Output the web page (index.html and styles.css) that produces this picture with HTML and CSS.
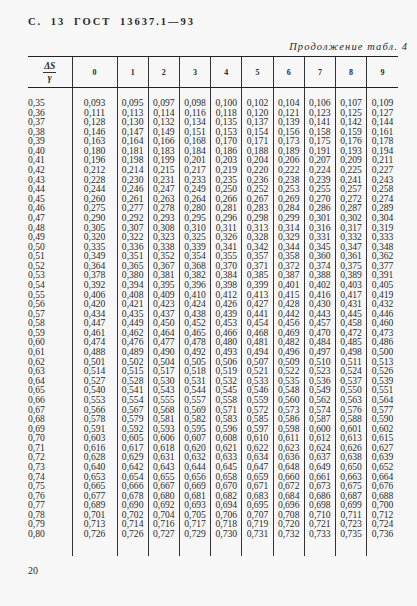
FILE: index.html
```html
<!DOCTYPE html>
<html lang="ru">
<head>
<meta charset="utf-8">
<title>ГОСТ 13637.1—93, с. 13</title>
<link rel="stylesheet" href="styles.css">
</head>
<body>
<div class="page">
<p class="title">С. 13 ГОСТ 13637.1—93</p>
<p class="cont">Продолжение табл. 4</p>
<table class="grid">
<colgroup><col class="c-label"><col class="c0"><col class="cn"><col class="cn"><col class="cn"><col class="cn"><col class="cn"><col class="cn"><col class="cn"><col class="cn"><col class="cn"></colgroup>
<thead>
<tr><th class="h-label"><span class="frac"><span class="num">ΔS</span><span class="den">γ</span></span></th><th>0</th><th>1</th><th>2</th><th>3</th><th>4</th><th>5</th><th>6</th><th>7</th><th>8</th><th>9</th></tr>
</thead>
<tbody>
<tr class="gap-top"><td></td><td></td><td></td><td></td><td></td><td></td><td></td><td></td><td></td><td></td><td></td></tr>
<tr><td>0,35</td><td>0,093</td><td>0,095</td><td>0,097</td><td>0,098</td><td>0,100</td><td>0,102</td><td>0,104</td><td>0,106</td><td>0,107</td><td>0,109</td></tr>
<tr><td>0,36</td><td>0,111</td><td>0,113</td><td>0,114</td><td>0,116</td><td>0,118</td><td>0,120</td><td>0,121</td><td>0,123</td><td>0,125</td><td>0,127</td></tr>
<tr><td>0,37</td><td>0,128</td><td>0,130</td><td>0,132</td><td>0,134</td><td>0,135</td><td>0,137</td><td>0,139</td><td>0,141</td><td>0,142</td><td>0,144</td></tr>
<tr><td>0,38</td><td>0,146</td><td>0,147</td><td>0,149</td><td>0,151</td><td>0,153</td><td>0,154</td><td>0,156</td><td>0,158</td><td>0,159</td><td>0,161</td></tr>
<tr><td>0,39</td><td>0,163</td><td>0,164</td><td>0,166</td><td>0,168</td><td>0,170</td><td>0,171</td><td>0,173</td><td>0,175</td><td>0,176</td><td>0,178</td></tr>
<tr><td>0,40</td><td>0,180</td><td>0,181</td><td>0,183</td><td>0,184</td><td>0,186</td><td>0,188</td><td>0,189</td><td>0,191</td><td>0,193</td><td>0,194</td></tr>
<tr><td>0,41</td><td>0,196</td><td>0,198</td><td>0,199</td><td>0,201</td><td>0,203</td><td>0,204</td><td>0,206</td><td>0,207</td><td>0,209</td><td>0,211</td></tr>
<tr><td>0,42</td><td>0,212</td><td>0,214</td><td>0,215</td><td>0,217</td><td>0,219</td><td>0,220</td><td>0,222</td><td>0,224</td><td>0,225</td><td>0,227</td></tr>
<tr><td>0,43</td><td>0,228</td><td>0,230</td><td>0,231</td><td>0,233</td><td>0,235</td><td>0,236</td><td>0,238</td><td>0,239</td><td>0,241</td><td>0,243</td></tr>
<tr><td>0,44</td><td>0,244</td><td>0,246</td><td>0,247</td><td>0,249</td><td>0,250</td><td>0,252</td><td>0,253</td><td>0,255</td><td>0,257</td><td>0,258</td></tr>
<tr><td>0,45</td><td>0,260</td><td>0,261</td><td>0,263</td><td>0,264</td><td>0,266</td><td>0,267</td><td>0,269</td><td>0,270</td><td>0,272</td><td>0,274</td></tr>
<tr><td>0,46</td><td>0,275</td><td>0,277</td><td>0,278</td><td>0,280</td><td>0,281</td><td>0,283</td><td>0,284</td><td>0,286</td><td>0,287</td><td>0,289</td></tr>
<tr><td>0,47</td><td>0,290</td><td>0,292</td><td>0,293</td><td>0,295</td><td>0,296</td><td>0,298</td><td>0,299</td><td>0,301</td><td>0,302</td><td>0,304</td></tr>
<tr><td>0,48</td><td>0,305</td><td>0,307</td><td>0,308</td><td>0,310</td><td>0,311</td><td>0,313</td><td>0,314</td><td>0,316</td><td>0,317</td><td>0,319</td></tr>
<tr><td>0,49</td><td>0,320</td><td>0,322</td><td>0,323</td><td>0,325</td><td>0,326</td><td>0,328</td><td>0,329</td><td>0,331</td><td>0,332</td><td>0,333</td></tr>
<tr><td>0,50</td><td>0,335</td><td>0,336</td><td>0,338</td><td>0,339</td><td>0,341</td><td>0,342</td><td>0,344</td><td>0,345</td><td>0,347</td><td>0,348</td></tr>
<tr><td>0,51</td><td>0,349</td><td>0,351</td><td>0,352</td><td>0,354</td><td>0,355</td><td>0,357</td><td>0,358</td><td>0,360</td><td>0,361</td><td>0,362</td></tr>
<tr><td>0,52</td><td>0,364</td><td>0,365</td><td>0,367</td><td>0,368</td><td>0,370</td><td>0,371</td><td>0,372</td><td>0,374</td><td>0,375</td><td>0,377</td></tr>
<tr><td>0,53</td><td>0,378</td><td>0,380</td><td>0,381</td><td>0,382</td><td>0,384</td><td>0,385</td><td>0,387</td><td>0,388</td><td>0,389</td><td>0,391</td></tr>
<tr><td>0,54</td><td>0,392</td><td>0,394</td><td>0,395</td><td>0,396</td><td>0,398</td><td>0,399</td><td>0,401</td><td>0,402</td><td>0,403</td><td>0,405</td></tr>
<tr><td>0,55</td><td>0,406</td><td>0,408</td><td>0,409</td><td>0,410</td><td>0,412</td><td>0,413</td><td>0,415</td><td>0,416</td><td>0,417</td><td>0,419</td></tr>
<tr><td>0,56</td><td>0,420</td><td>0,421</td><td>0,423</td><td>0,424</td><td>0,426</td><td>0,427</td><td>0,428</td><td>0,430</td><td>0,431</td><td>0,432</td></tr>
<tr><td>0,57</td><td>0,434</td><td>0,435</td><td>0,437</td><td>0,438</td><td>0,439</td><td>0,441</td><td>0,442</td><td>0,443</td><td>0,445</td><td>0,446</td></tr>
<tr><td>0,58</td><td>0,447</td><td>0,449</td><td>0,450</td><td>0,452</td><td>0,453</td><td>0,454</td><td>0,456</td><td>0,457</td><td>0,458</td><td>0,460</td></tr>
<tr><td>0,59</td><td>0,461</td><td>0,462</td><td>0,464</td><td>0,465</td><td>0,466</td><td>0,468</td><td>0,469</td><td>0,470</td><td>0,472</td><td>0,473</td></tr>
<tr><td>0,60</td><td>0,474</td><td>0,476</td><td>0,477</td><td>0,478</td><td>0,480</td><td>0,481</td><td>0,482</td><td>0,484</td><td>0,485</td><td>0,486</td></tr>
<tr><td>0,61</td><td>0,488</td><td>0,489</td><td>0,490</td><td>0,492</td><td>0,493</td><td>0,494</td><td>0,496</td><td>0,497</td><td>0,498</td><td>0,500</td></tr>
<tr><td>0,62</td><td>0,501</td><td>0,502</td><td>0,504</td><td>0,505</td><td>0,506</td><td>0,507</td><td>0,509</td><td>0,510</td><td>0,511</td><td>0,513</td></tr>
<tr><td>0,63</td><td>0,514</td><td>0,515</td><td>0,517</td><td>0,518</td><td>0,519</td><td>0,521</td><td>0,522</td><td>0,523</td><td>0,524</td><td>0,526</td></tr>
<tr><td>0,64</td><td>0,527</td><td>0,528</td><td>0,530</td><td>0,531</td><td>0,532</td><td>0,533</td><td>0,535</td><td>0,536</td><td>0,537</td><td>0,539</td></tr>
<tr><td>0,65</td><td>0,540</td><td>0,541</td><td>0,543</td><td>0,544</td><td>0,545</td><td>0,546</td><td>0,548</td><td>0,549</td><td>0,550</td><td>0,551</td></tr>
<tr><td>0,66</td><td>0,553</td><td>0,554</td><td>0,555</td><td>0,557</td><td>0,558</td><td>0,559</td><td>0,560</td><td>0,562</td><td>0,563</td><td>0,564</td></tr>
<tr><td>0,67</td><td>0,566</td><td>0,567</td><td>0,568</td><td>0,569</td><td>0,571</td><td>0,572</td><td>0,573</td><td>0,574</td><td>0,576</td><td>0,577</td></tr>
<tr><td>0,68</td><td>0,578</td><td>0,579</td><td>0,581</td><td>0,582</td><td>0,583</td><td>0,585</td><td>0,586</td><td>0,587</td><td>0,588</td><td>0,590</td></tr>
<tr><td>0,69</td><td>0,591</td><td>0,592</td><td>0,593</td><td>0,595</td><td>0,596</td><td>0,597</td><td>0,598</td><td>0,600</td><td>0,601</td><td>0,602</td></tr>
<tr><td>0,70</td><td>0,603</td><td>0,605</td><td>0,606</td><td>0,607</td><td>0,608</td><td>0,610</td><td>0,611</td><td>0,612</td><td>0,613</td><td>0,615</td></tr>
<tr><td>0,71</td><td>0,616</td><td>0,617</td><td>0,618</td><td>0,620</td><td>0,621</td><td>0,622</td><td>0,623</td><td>0,624</td><td>0,626</td><td>0,627</td></tr>
<tr><td>0,72</td><td>0,628</td><td>0,629</td><td>0,631</td><td>0,632</td><td>0,633</td><td>0,634</td><td>0,636</td><td>0,637</td><td>0,638</td><td>0,639</td></tr>
<tr><td>0,73</td><td>0,640</td><td>0,642</td><td>0,643</td><td>0,644</td><td>0,645</td><td>0,647</td><td>0,648</td><td>0,649</td><td>0,650</td><td>0,652</td></tr>
<tr><td>0,74</td><td>0,653</td><td>0,654</td><td>0,655</td><td>0,656</td><td>0,658</td><td>0,659</td><td>0,660</td><td>0,661</td><td>0,663</td><td>0,664</td></tr>
<tr><td>0,75</td><td>0,665</td><td>0,666</td><td>0,667</td><td>0,669</td><td>0,670</td><td>0,671</td><td>0,672</td><td>0,673</td><td>0,675</td><td>0,676</td></tr>
<tr><td>0,76</td><td>0,677</td><td>0,678</td><td>0,680</td><td>0,681</td><td>0,682</td><td>0,683</td><td>0,684</td><td>0,686</td><td>0,687</td><td>0,688</td></tr>
<tr><td>0,77</td><td>0,689</td><td>0,690</td><td>0,692</td><td>0,693</td><td>0,694</td><td>0,695</td><td>0,696</td><td>0,698</td><td>0,699</td><td>0,700</td></tr>
<tr><td>0,78</td><td>0,701</td><td>0,702</td><td>0,704</td><td>0,705</td><td>0,706</td><td>0,707</td><td>0,708</td><td>0,710</td><td>0,711</td><td>0,712</td></tr>
<tr><td>0,79</td><td>0,713</td><td>0,714</td><td>0,716</td><td>0,717</td><td>0,718</td><td>0,719</td><td>0,720</td><td>0,721</td><td>0,723</td><td>0,724</td></tr>
<tr><td>0,80</td><td>0,726</td><td>0,726</td><td>0,727</td><td>0,729</td><td>0,730</td><td>0,731</td><td>0,732</td><td>0,733</td><td>0,735</td><td>0,736</td></tr>
<tr class="gap-bottom"><td></td><td></td><td></td><td></td><td></td><td></td><td></td><td></td><td></td><td></td><td></td></tr>
</tbody>
</table>
<p class="folio">20</p>
</div>
</body>
</html>
```
FILE: styles.css
```css
html, body {
  margin: 0;
  background: #f7f7f7;
}

.page {
  padding: 16px 9px 0 28px;
  font-family: "Liberation Serif", "DejaVu Serif", serif;
  color: #2a2a2a;
}

.title {
  margin: 0;
  font-weight: bold;
  font-size: 10.5px;
  line-height: 12px;
  letter-spacing: 2px;
  word-spacing: 4px;
}

.cont {
  margin: 13px 0 0;
  font-style: italic;
  text-align: right;
  font-size: 10.5px;
  line-height: 12px;
  letter-spacing: 1.1px;
}

.grid {
  margin-top: 3px;
  width: 370px;
  border-collapse: collapse;
  table-layout: fixed;
  font-size: 9.6px;
}

.c-label { width: 44px; }
.c0 { width: 45px; }
.cn { width: 31.2px; }

.grid th,
.grid td {
  padding: 0;
}

.grid th + th,
.grid td + td {
  border-left: 1px solid #333;
}

.grid thead th {
  height: 30px;
  border-top: 1.5px solid #222;
  border-bottom: 1.5px solid #222;
  font-size: 8px;
  font-weight: bold;
  text-align: center;
  vertical-align: middle;
}

.grid thead th.h-label {
  font-weight: normal;
}

.frac {
  display: inline-flex;
  flex-direction: column;
  align-items: center;
  font-size: 9.5px;
  line-height: 11px;
}

.num {
  font-style: italic;
  font-weight: bold;
  padding: 0 1px;
  border-bottom: 1px solid #333;
}

.den {
  font-style: italic;
  font-weight: bold;
}

.grid tbody td {
  height: 9.58px;
  line-height: 9.58px;
  text-align: center;
  white-space: nowrap;
}

.grid tbody td:first-child {
  text-align: left;
}

.grid tbody tr.gap-top td {
  height: 10px;
}

.grid tbody tr.gap-bottom td {
  height: 17px;
}

.folio {
  margin: 9px 0 0;
  font-size: 10px;
  line-height: 12px;
}
```
